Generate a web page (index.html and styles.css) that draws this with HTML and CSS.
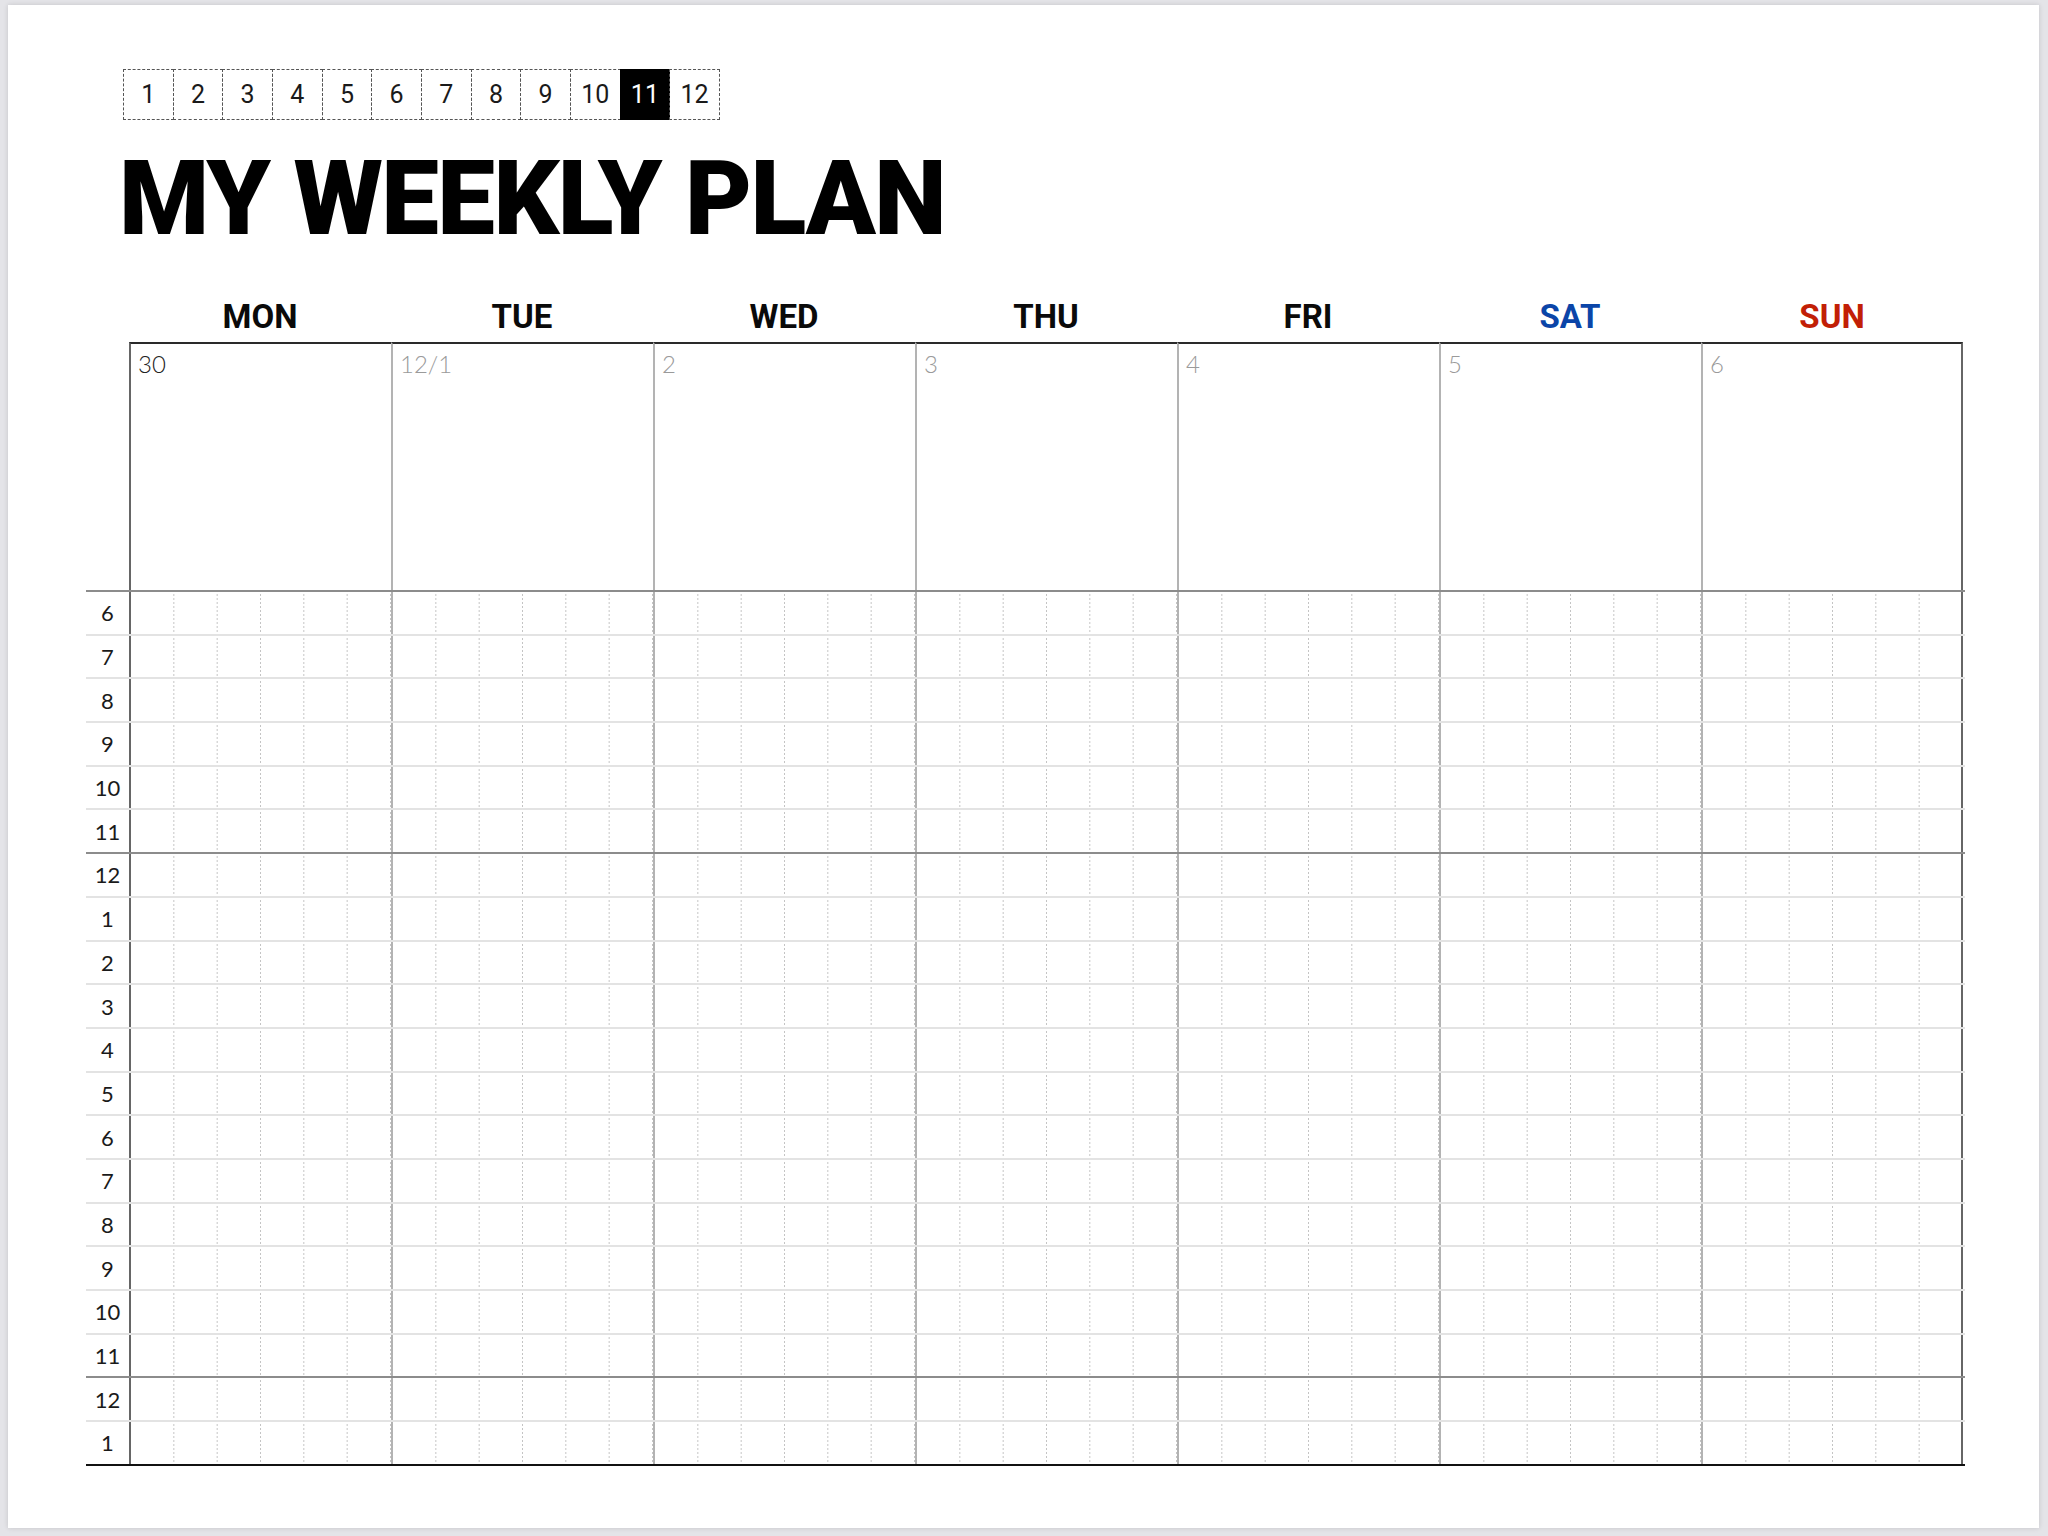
FILE: index.html
```html
<!DOCTYPE html>
<html lang="en">
<head>
<meta charset="utf-8">
<title>My Weekly Plan</title>
<link rel="stylesheet" href="styles.css">
</head>
<body>
<div class="page">
  <div class="months">
    <div class="month">1</div>
    <div class="month">2</div>
    <div class="month">3</div>
    <div class="month">4</div>
    <div class="month">5</div>
    <div class="month">6</div>
    <div class="month">7</div>
    <div class="month">8</div>
    <div class="month">9</div>
    <div class="month">10</div>
    <div class="month active">11</div>
    <div class="month">12</div>
  </div>

  <h1 class="title">MY WEEKLY PLAN</h1>

  <div class="board">
    <div class="dayheads">
      <div class="corner"></div>
      <div class="dh">MON</div>
      <div class="dh">TUE</div>
      <div class="dh">WED</div>
      <div class="dh">THU</div>
      <div class="dh">FRI</div>
      <div class="dh sat">SAT</div>
      <div class="dh sun">SUN</div>
    </div>

    <div class="daterow">
      <div class="corner"></div>
      <div class="dc first"><span class="date current">30</span></div>
      <div class="dc"><span class="date">12/1</span></div>
      <div class="dc"><span class="date">2</span></div>
      <div class="dc"><span class="date">3</span></div>
      <div class="dc"><span class="date">4</span></div>
      <div class="dc"><span class="date">5</span></div>
      <div class="dc last"><span class="date">6</span></div>
    </div>

    <div class="hours">
      <div class="hrow major"><div class="hl">6</div><div class="c first"></div><div class="c"></div><div class="c"></div><div class="c"></div><div class="c"></div><div class="c"></div><div class="c last"></div></div>
      <div class="hrow"><div class="hl">7</div><div class="c first"></div><div class="c"></div><div class="c"></div><div class="c"></div><div class="c"></div><div class="c"></div><div class="c last"></div></div>
      <div class="hrow"><div class="hl">8</div><div class="c first"></div><div class="c"></div><div class="c"></div><div class="c"></div><div class="c"></div><div class="c"></div><div class="c last"></div></div>
      <div class="hrow"><div class="hl">9</div><div class="c first"></div><div class="c"></div><div class="c"></div><div class="c"></div><div class="c"></div><div class="c"></div><div class="c last"></div></div>
      <div class="hrow"><div class="hl">10</div><div class="c first"></div><div class="c"></div><div class="c"></div><div class="c"></div><div class="c"></div><div class="c"></div><div class="c last"></div></div>
      <div class="hrow"><div class="hl">11</div><div class="c first"></div><div class="c"></div><div class="c"></div><div class="c"></div><div class="c"></div><div class="c"></div><div class="c last"></div></div>
      <div class="hrow major"><div class="hl">12</div><div class="c first"></div><div class="c"></div><div class="c"></div><div class="c"></div><div class="c"></div><div class="c"></div><div class="c last"></div></div>
      <div class="hrow"><div class="hl">1</div><div class="c first"></div><div class="c"></div><div class="c"></div><div class="c"></div><div class="c"></div><div class="c"></div><div class="c last"></div></div>
      <div class="hrow"><div class="hl">2</div><div class="c first"></div><div class="c"></div><div class="c"></div><div class="c"></div><div class="c"></div><div class="c"></div><div class="c last"></div></div>
      <div class="hrow"><div class="hl">3</div><div class="c first"></div><div class="c"></div><div class="c"></div><div class="c"></div><div class="c"></div><div class="c"></div><div class="c last"></div></div>
      <div class="hrow"><div class="hl">4</div><div class="c first"></div><div class="c"></div><div class="c"></div><div class="c"></div><div class="c"></div><div class="c"></div><div class="c last"></div></div>
      <div class="hrow"><div class="hl">5</div><div class="c first"></div><div class="c"></div><div class="c"></div><div class="c"></div><div class="c"></div><div class="c"></div><div class="c last"></div></div>
      <div class="hrow"><div class="hl">6</div><div class="c first"></div><div class="c"></div><div class="c"></div><div class="c"></div><div class="c"></div><div class="c"></div><div class="c last"></div></div>
      <div class="hrow"><div class="hl">7</div><div class="c first"></div><div class="c"></div><div class="c"></div><div class="c"></div><div class="c"></div><div class="c"></div><div class="c last"></div></div>
      <div class="hrow"><div class="hl">8</div><div class="c first"></div><div class="c"></div><div class="c"></div><div class="c"></div><div class="c"></div><div class="c"></div><div class="c last"></div></div>
      <div class="hrow"><div class="hl">9</div><div class="c first"></div><div class="c"></div><div class="c"></div><div class="c"></div><div class="c"></div><div class="c"></div><div class="c last"></div></div>
      <div class="hrow"><div class="hl">10</div><div class="c first"></div><div class="c"></div><div class="c"></div><div class="c"></div><div class="c"></div><div class="c"></div><div class="c last"></div></div>
      <div class="hrow"><div class="hl">11</div><div class="c first"></div><div class="c"></div><div class="c"></div><div class="c"></div><div class="c"></div><div class="c"></div><div class="c last"></div></div>
      <div class="hrow major"><div class="hl">12</div><div class="c first"></div><div class="c"></div><div class="c"></div><div class="c"></div><div class="c"></div><div class="c"></div><div class="c last"></div></div>
      <div class="hrow end"><div class="hl">1</div><div class="c first"></div><div class="c"></div><div class="c"></div><div class="c"></div><div class="c"></div><div class="c"></div><div class="c last"></div></div>
    </div>
  </div>
</div>
</body>
</html>
```

FILE: styles.css
```css
* {
  box-sizing: border-box;
}

html,
body {
  margin: 0;
}

body {
  width: 2048px;
  height: 1536px;
  padding: 5px 9px 8px 8px;
  background: #e4e4e8;
  font-family: Roboto, "Liberation Sans", sans-serif;
  color: #111;
}

.page {
  width: 2031px;
  height: 1523px;
  background: #fff;
  box-shadow: 0 0 5px rgba(0, 0, 0, 0.14);
  padding: 64px 0 0 78px;
}

/* month selector */
.months {
  display: flex;
  margin-left: 37px;
  height: 51px;
}

.month {
  width: 50.67px;
  height: 51px;
  margin-left: -1px;
  border: 1px dashed #555;
  display: flex;
  align-items: center;
  justify-content: center;
  font-size: 25px;
  color: #1a1a1a;
}

.month:first-child {
  margin-left: 0;
}

.month.active {
  background: #000;
  color: #fff;
  border: 1px solid #000;
}

/* title */
.title {
  margin: 27px 0 0 33px;
  height: 103px;
  font-size: 103px;
  line-height: 103px;
  font-weight: 900;
  color: #000;
  letter-spacing: -1.6px;
}

/* board */
.board {
  margin-top: 50px;
  width: 1879px;
}

.dayheads,
.daterow,
.hrow {
  display: grid;
  grid-template-columns: 43px repeat(7, 262px);
}

.dayheads {
  height: 33px;
  margin-bottom: 9px;
}

.dh {
  text-align: center;
  font-size: 33px;
  line-height: 33px;
  font-weight: 700;
  color: #0a0a0a;
}

.dh.sat {
  color: #0b45a8;
}

.dh.sun {
  color: #c21f06;
}

.daterow {
  height: 248px;
}

.dc {
  border-top: 2px solid #2a2a2a;
  border-left: 2px solid #b3b3b3;
  padding: 6px 0 0 7px;
}

.dc.first,
.c.first {
  border-left-color: #666;
}

.dc.last,
.c.last {
  border-right: 2px solid #666;
}

.date {
  font-family: Lato, "Noto Sans", sans-serif;
  font-weight: 300;
  font-size: 24px;
  line-height: 28px;
  color: #9a9a9a;
}

.date.current {
  color: #222;
}

/* hour rows */
.hrow {
  height: 43.7px;
  border-top: 2px solid #e3e3e3;
}

.hrow.major {
  border-top-color: #8c8c8c;
}

.hrow.end {
  height: 45.7px;
  border-bottom: 2px solid #111;
}

.hl {
  display: flex;
  align-items: center;
  justify-content: center;
  font-family: Lato, "Noto Sans", sans-serif;
  font-weight: 400;
  font-size: 22px;
  color: #1a1a1a;
}

.c {
  border-left: 2px solid #b3b3b3;
  background-image:
    linear-gradient(to bottom, #fff 50%, rgba(255, 255, 255, 0) 50%),
    linear-gradient(to right, rgba(0, 0, 0, 0) calc(100% - 1px), #c4c4c4 calc(100% - 1px));
  background-size: 100% 4px, 43.33px 100%;
  background-repeat: repeat-y, repeat-x;
}
```
